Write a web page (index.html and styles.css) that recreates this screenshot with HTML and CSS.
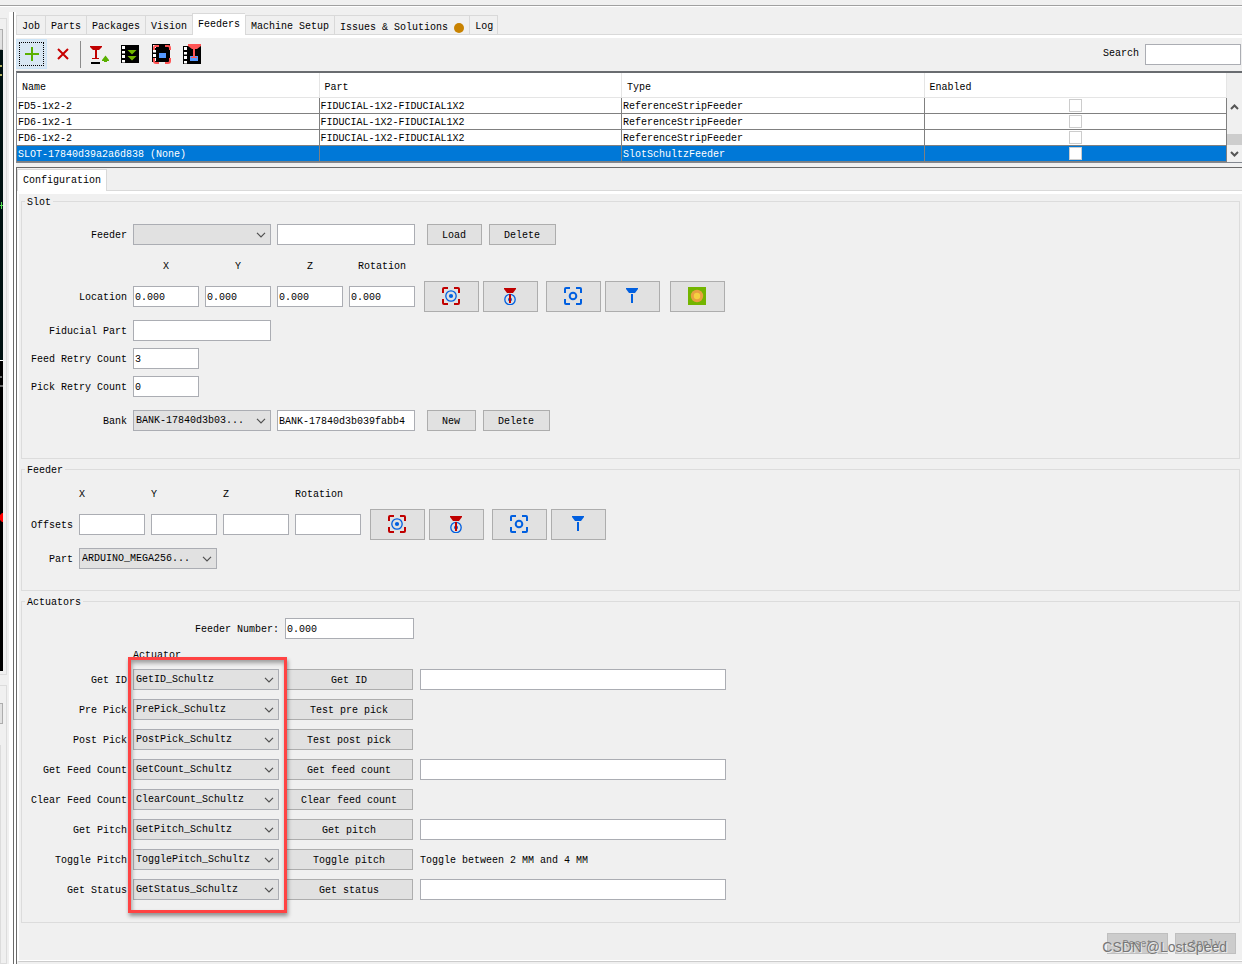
FILE: index.html
```html
<!DOCTYPE html>
<html lang="en">
<head>
<meta charset="utf-8">
<title>Feeders</title>
<link rel="stylesheet" href="styles.css">
</head>
<body>
<svg class="defs" aria-hidden="true">
  <symbol id="chevron" viewBox="0 0 10 6"><path d="M1 .8 5 4.8 9 .8" fill="none" stroke="#505050" stroke-width="1.2"/></symbol>
  <symbol id="cam-capture" viewBox="0 0 18 18">
    <path d="M1 6V2Q1 1 2 1H6M12 1h4q1 0 1 1v4M17 12v4q0 1-1 1h-4M6 17H2q-1 0-1-1v-4" fill="none" stroke="#c00000" stroke-width="2"/>
    <circle cx="9" cy="9" r="5.2" fill="none" stroke="#005fe0" stroke-width="1.3"/><circle cx="9" cy="9" r="2.1" fill="#005fe0"/>
  </symbol>
  <symbol id="tool-capture" viewBox="0 0 18 18">
    <circle cx="9" cy="12.500" r="5.200" fill="none" stroke="#005fe0" stroke-width="1.3"/><circle cx="9" cy="12.500" r="2" fill="#005fe0"/>
    <path d="M3 1h12v1l-3 4H6L3 2zM8 7h2v9H8z" fill="#c00000"/>
  </symbol>
  <symbol id="cam-move" viewBox="0 0 18 18">
    <path d="M1 6V2Q1 1 2 1H6M12 1h4q1 0 1 1v4M17 12v4q0 1-1 1h-4M6 17H2q-1 0-1-1v-4" fill="none" stroke="#005fe0" stroke-width="2"/>
    <circle cx="9" cy="9" r="3.3" fill="none" stroke="#005fe0" stroke-width="2"/>
  </symbol>
  <symbol id="tool-move" viewBox="0 0 18 18"><path d="M3 1h12v1l-3 4H6L3 2zM8 7h2v9H8z" fill="#005fe0"/></symbol>
  <symbol id="fiducial" viewBox="0 0 18 18"><path d="M0 0h18v18H0z" fill="#73b500"/><circle cx="9" cy="9" r="6.2" fill="#e8a040"/><circle cx="9" cy="9" r="3.2" fill="#f5d040"/></symbol>
</svg>

<div class="top-edge"></div>
<div class="workspace">
  <aside class="rail">
    <div class="rail-box rail-camera">
      <div class="rail-stub"></div>
      <div class="camera-view">
        <svg width="3" height="621" viewBox="0 0 3 621" aria-hidden="true">
          <path d="M0 0h3v310H0z" fill="#001212"/><path d="M0 310h3v311H0z" fill="#000"/>
          <path d="M0 16h2M0 25h2" stroke="#b0b060" stroke-width="2"/><path d="M0 155.500h3M1.500 152v7" stroke="#50e050"/>
          <path d="M0 310.500h3" stroke="#fff"/><path d="M0 327h2M0 336h3" stroke="#666" stroke-width="2"/>
          <path d="M0 465l2-2h1v9H2l-2-2z" fill="#f00"/>
        </svg>
      </div>
    </div>
    <div class="rail-box rail-controls"><div class="rail-stub"></div><div class="rail-line"></div></div>
  </aside>

  <main class="main">
    <nav class="tabs" role="tablist">
      <button class="tab" role="tab">Job</button>
      <button class="tab" role="tab">Parts</button>
      <button class="tab" role="tab">Packages</button>
      <button class="tab" role="tab">Vision</button>
      <button class="tab tab-active" role="tab" aria-selected="true">Feeders</button>
      <button class="tab" role="tab">Machine Setup</button>
      <button class="tab tab-issues" role="tab">Issues &amp; Solutions<span class="dot"></span></button>
      <button class="tab tab-last" role="tab">Log</button>
    </nav>

    <div class="toolbar">
      <button class="tool tool-focus" aria-label="New feeder"><svg width="24" height="24" viewBox="0 0 24 24"><path d="M12 5v14M5 12h14" stroke="#5ab000" stroke-width="2"/></svg></button>
      <button class="tool" aria-label="Delete feeder"><svg width="24" height="24" viewBox="0 0 24 24"><path d="M7 7l10 10M17 7 7 17" stroke="#c80000" stroke-width="2"/></svg></button>
      <span class="separator"></span>
      <button class="tool" aria-label="Pick"><svg width="24" height="24" viewBox="0 0 24 24"><path d="M3 4h12v1l-3 3H6L3 5zM8 8h2v9H8zM5 16h7v1H5z" fill="#c00000"/><path d="M4 20h9v2H4z" fill="#000"/><path d="M18.500 13.500 22 18v1h-2v1h-3v-1h-2v-1z" fill="#5ab000"/></svg></button>
      <button class="tool" aria-label="Feed"><svg width="24" height="24" viewBox="0 0 24 24"><path d="M3 3h18v18H3z"/><path d="M4 4h3v3H4zM4 9h3v2.500H4zM4 13h3v3H4zM4 18h3v2.500H4z" fill="#fff"/><path d="M9.500 8h9L14 12.500zM9.500 14h9L14 18.500z" fill="#73b500"/></svg></button>
      <button class="tool" aria-label="Move camera to pick location"><svg width="24" height="24" viewBox="0 0 24 24"><path d="M3 2h18v18H3z"/><path d="M4 3h3v3H4zM4 8h3v2.500H4zM4 12h3v3H4zM4 16h3v3H4z" fill="#fff"/><path d="M10 11h7v5h-7z" fill="#5599ff"/><path d="M5 8V6q0-2 2-2h3M16 4h3q2 0 2 2v2M21 16v3q0 2-2 2h-3M10 21H7q-2 0-2-2v-3" fill="none" stroke="#ff5555" stroke-width="2"/></svg></button>
      <button class="tool" aria-label="Move tool to pick location"><svg width="24" height="24" viewBox="0 0 24 24"><path d="M3 4h18v18H3z"/><path d="M4 5h3v3H4zM4 10h3v2.500H4zM4 14h3v3H4zM4 19h3v2.500H4z" fill="#fff"/><path d="M10 14h8v5h-8z" fill="#5599ff"/><path d="M8 2h13v2l-4 3h-5L8 4zM13 7h2v9h-2zM11 15h6v1h-6z" fill="#ff5555"/></svg></button>
      <label class="search-label" for="search">Search</label>
      <input class="field search" id="search" type="text">
    </div>

    <section class="table-pane">
      <div class="table-scroll">
        <table class="feeders">
          <thead><tr><th>Name</th><th>Part</th><th>Type</th><th>Enabled</th></tr></thead>
          <tbody>
            <tr><td>FD5-1x2-2</td><td>FIDUCIAL-1X2-FIDUCIAL1X2</td><td>ReferenceStripFeeder</td><td class="check-cell"><input class="check" type="checkbox" aria-label="Enable FD5-1x2-2"></td></tr>
            <tr><td>FD6-1x2-1</td><td>FIDUCIAL-1X2-FIDUCIAL1X2</td><td>ReferenceStripFeeder</td><td class="check-cell"><input class="check" type="checkbox" aria-label="Enable FD6-1x2-1"></td></tr>
            <tr><td>FD6-1x2-2</td><td>FIDUCIAL-1X2-FIDUCIAL1X2</td><td>ReferenceStripFeeder</td><td class="check-cell"><input class="check" type="checkbox" aria-label="Enable FD6-1x2-2"></td></tr>
            <tr class="selected"><td>SLOT-17840d39a2a6d838 (None)</td><td></td><td>SlotSchultzFeeder</td><td class="check-cell"><input class="check" type="checkbox" aria-label="Enable slot"></td></tr>
          </tbody>
        </table>
      </div>
      <div class="scrollbar">
        <svg width="9" height="6" viewBox="0 0 9 6" aria-hidden="true"><path d="M1 5l3.500-3.500L8 5" fill="none" stroke="#555" stroke-width="2"/></svg>
        <span class="thumb"></span>
        <svg width="9" height="6" viewBox="0 0 9 6" aria-hidden="true"><path d="M1 1l3.500 3.500L8 1" fill="none" stroke="#555" stroke-width="2"/></svg>
      </div>
    </section>

    <section class="config">
      <nav class="tabs config-tabs" role="tablist"><button class="tab tab-active" role="tab" aria-selected="true">Configuration</button></nav>
      <div class="config-body">
        <fieldset class="group group-slot">
          <legend>Slot</legend>
          <div class="row">
            <label class="label" for="slot-feeder">Feeder</label>
            <span class="combo w-wide"><select id="slot-feeder"><option></option></select><svg><use href="#chevron"/></svg></span>
            <input class="field w-wide" type="text" aria-label="Feeder name">
            <div class="actions"><button class="btn">Load</button><button class="btn">Delete</button></div>
          </div>
          <div class="row axes">
            <span class="label"></span><span class="w-axis">X</span><span class="w-axis">Y</span><span class="w-axis">Z</span><span class="w-axis">Rotation</span>
          </div>
          <div class="row row-location">
            <label class="label" for="loc-x">Location</label>
            <input class="field w-axis" id="loc-x" type="text" value="0.000">
            <input class="field w-axis" type="text" value="0.000" aria-label="Y">
            <input class="field w-axis" type="text" value="0.000" aria-label="Z">
            <input class="field w-axis" type="text" value="0.000" aria-label="Rotation">
            <div class="icon-set">
              <div class="pair"><button class="icon-btn" aria-label="Capture camera"><svg><use href="#cam-capture"/></svg></button><button class="icon-btn" aria-label="Capture tool"><svg><use href="#tool-capture"/></svg></button></div>
              <div class="pair"><button class="icon-btn" aria-label="Move camera"><svg><use href="#cam-move"/></svg></button><button class="icon-btn" aria-label="Move tool"><svg><use href="#tool-move"/></svg></button></div>
              <button class="icon-btn icon-btn-apart" aria-label="Fiducial align"><svg><use href="#fiducial"/></svg></button>
            </div>
          </div>
          <div class="row row-fiducial"><label class="label" for="fid-part">Fiducial Part</label><input class="field w-wide" id="fid-part" type="text"></div>
          <div class="row row-retry"><label class="label" for="feed-retry">Feed Retry Count</label><input class="field w-axis" id="feed-retry" type="text" value="3"></div>
          <div class="row row-retry"><label class="label" for="pick-retry">Pick Retry Count</label><input class="field w-axis" id="pick-retry" type="text" value="0"></div>
          <div class="row row-bank">
            <label class="label" for="bank">Bank</label>
            <span class="combo w-wide"><select id="bank"><option>BANK-17840d3b03...</option></select><svg><use href="#chevron"/></svg></span>
            <input class="field w-wide" type="text" value="BANK-17840d3b039fabb4" aria-label="Bank name">
            <div class="actions"><button class="btn">New</button><button class="btn">Delete</button></div>
          </div>
        </fieldset>

        <fieldset class="group group-feeder">
          <legend>Feeder</legend>
          <div class="row axes">
            <span class="label"></span><span class="w-axis">X</span><span class="w-axis">Y</span><span class="w-axis">Z</span><span class="w-axis">Rotation</span>
          </div>
          <div class="row row-location">
            <label class="label" for="off-x">Offsets</label>
            <input class="field w-axis" id="off-x" type="text">
            <input class="field w-axis" type="text" aria-label="Y offset">
            <input class="field w-axis" type="text" aria-label="Z offset">
            <input class="field w-axis" type="text" aria-label="Rotation offset">
            <div class="icon-set">
              <div class="pair"><button class="icon-btn" aria-label="Capture camera"><svg><use href="#cam-capture"/></svg></button><button class="icon-btn" aria-label="Capture tool"><svg><use href="#tool-capture"/></svg></button></div>
              <div class="pair"><button class="icon-btn" aria-label="Move camera"><svg><use href="#cam-move"/></svg></button><button class="icon-btn" aria-label="Move tool"><svg><use href="#tool-move"/></svg></button></div>
            </div>
          </div>
          <div class="row row-fiducial">
            <label class="label" for="part">Part</label>
            <span class="combo w-wide"><select id="part"><option>ARDUINO_MEGA256...</option></select><svg><use href="#chevron"/></svg></span>
          </div>
        </fieldset>

        <fieldset class="group group-actuators">
          <legend>Actuators</legend>
          <div class="row"><label class="label label-number" for="feeder-number">Feeder Number:</label><input class="field w-number" id="feeder-number" type="text" value="0.000"></div>
          <div class="row axes"><span class="label"></span><span>Actuator</span></div>
          <div class="actuators">
            <div class="row"><label class="label" for="a1">Get ID</label><span class="combo w-actuator"><select id="a1"><option>GetID_Schultz</option></select><svg><use href="#chevron"/></svg></span><button class="btn w-action">Get ID</button><input class="field w-result" type="text" aria-label="ID"></div>
            <div class="row"><label class="label" for="a2">Pre Pick</label><span class="combo w-actuator"><select id="a2"><option>PrePick_Schultz</option></select><svg><use href="#chevron"/></svg></span><button class="btn w-action">Test pre pick</button></div>
            <div class="row"><label class="label" for="a3">Post Pick</label><span class="combo w-actuator"><select id="a3"><option>PostPick_Schultz</option></select><svg><use href="#chevron"/></svg></span><button class="btn w-action">Test post pick</button></div>
            <div class="row"><label class="label" for="a4">Get Feed Count</label><span class="combo w-actuator"><select id="a4"><option>GetCount_Schultz</option></select><svg><use href="#chevron"/></svg></span><button class="btn w-action">Get feed count</button><input class="field w-result" type="text" aria-label="Feed count"></div>
            <div class="row"><label class="label" for="a5">Clear Feed Count</label><span class="combo w-actuator"><select id="a5"><option>ClearCount_Schultz</option></select><svg><use href="#chevron"/></svg></span><button class="btn w-action">Clear feed count</button></div>
            <div class="row"><label class="label" for="a6">Get Pitch</label><span class="combo w-actuator"><select id="a6"><option>GetPitch_Schultz</option></select><svg><use href="#chevron"/></svg></span><button class="btn w-action">Get pitch</button><input class="field w-result" type="text" aria-label="Pitch"></div>
            <div class="row"><label class="label" for="a7">Toggle Pitch</label><span class="combo w-actuator"><select id="a7"><option>TogglePitch_Schultz</option></select><svg><use href="#chevron"/></svg></span><button class="btn w-action">Toggle pitch</button><span class="note">Toggle between 2 MM and 4 MM</span></div>
            <div class="row"><label class="label" for="a8">Get Status</label><span class="combo w-actuator"><select id="a8"><option>GetStatus_Schultz</option></select><svg><use href="#chevron"/></svg></span><button class="btn w-action">Get status</button><input class="field w-result" type="text" aria-label="Status"></div>
            <div class="highlight"></div>
          </div>
        </fieldset>

        <footer class="footer">
          <button class="btn btn-off" disabled>Reset</button><button class="btn btn-off" disabled>Apply</button>
          <span class="watermark">CSDN @LostSpeed</span>
        </footer>
      </div>
    </section>
  </main>
</div>
</body>
</html>
```
FILE: styles.css
```css
* { box-sizing: border-box; }

body {
  margin: 0;
  min-height: 100vh;
  display: flex;
  flex-direction: column;
  background: #f0f0f0;
  color: #000;
  font: 10px/12px "Liberation Mono", monospace;
}

button, input, select { font: inherit; color: inherit; margin: 0; border-radius: 0; }
button { padding: 0; }
.defs { position: absolute; width: 0; height: 0; }

.top-edge { height: 7px; border-bottom: 1px solid #fff; box-shadow: inset 0 -1px #a0a0a0; }
.workspace { flex: 1; display: flex; padding-top: 5px; }

/* Edge of the neighbouring pane */
.rail {
  width: 13px;
  flex: none;
  display: flex;
  flex-direction: column;
  gap: 10px;
  padding: 6px 6px 0 0;
  box-shadow: inset -4px 0 #fff;
}
.rail-box { border: 1px solid #dcdcdc; border-left: 0; }
.rail-camera { flex: 1; padding-top: 10px; }
.rail-controls { height: 279px; padding-top: 17px; }
.rail-stub { width: 3px; height: 21px; background: #e1e1e1; border: 1px solid #adadad; border-left: 0; }
.rail-line { width: 1px; height: 220px; margin-top: 21px; background: #dcdcdc; }
.camera-view { width: 3px; height: 621px; background: #000; }
.camera-view svg { display: block; }

.main {
  flex: 1;
  min-width: 0;
  display: flex;
  flex-direction: column;
  padding-left: 2px;
  border-left: 1px solid #696969;
  box-shadow: inset 2px 0 #fff;
}

.tabs {
  display: flex;
  align-items: flex-end;
  height: 26px;
  border-bottom: 3px solid #fff;
  box-shadow: inset 0 -1px #d9d9d9;
}
.tab {
  height: 20px;
  padding: 3px 5px 0;
  border: 1px solid #d9d9d9;
  border-right: 0;
  background: #f0f0f0;
}
.tab-active { height: 22px; padding: 0 5px; border-bottom: 0; background: #fff; }
.tab-last { border-right: 1px solid #d9d9d9; padding-right: 4px; }
.tab-issues { display: flex; align-items: center; gap: 6px; padding-top: 6px; }
.dot { width: 10px; height: 10px; border-radius: 50%; background: #c88200; }

.toolbar { display: flex; align-items: center; height: 33px; padding: 0 1px 1px 0; }
.tool { display: grid; place-items: center; width: 31px; height: 30px; border: 0; background: none; }
.tool-focus { background: #d8e6f2; border: 1px solid #cce4f7; outline: 1px dotted #000; outline-offset: -4px; }
.separator { width: 1px; height: 27px; margin: 0 2px; background: #8c8c8c; }
.search-label { margin-left: auto; }
.search { width: 96px; margin-left: 6px; }

.field { height: 21px; padding: 1px 1px 0; border: 1px solid #abadb3; background: #fff; outline: 0; }

.table-pane {
  display: flex;
  border: 1px solid #82878f;
  border-top: 2px solid #696c70;
  border-right: 0;
}
.table-scroll { flex: 1; min-width: 0; }
.feeders { width: 100%; table-layout: fixed; border-collapse: separate; border-spacing: 0; background: #fff; }
.feeders th {
  height: 25px;
  padding: 5px 5px 0;
  text-align: left;
  font-weight: normal;
  border-right: 1px solid #e5e5e5;
  border-bottom: 1px solid #e5e5e5;
}
.feeders td { height: 16px; padding: 2px 1px 0; line-height: 13px; border-right: 1px solid #808080; border-bottom: 1px solid #808080; }
.feeders .check-cell { padding-top: 0; }
.check { appearance: none; display: block; width: 13px; height: 13px; margin: 0 auto; border: 1px solid #ccc; background: #fff; }
.selected td { background: #0078d7; color: #fff; }
.scrollbar { width: 15px; padding: 31px 0 5px; display: flex; flex-direction: column; align-items: center; }
.thumb { width: 15px; height: 11px; margin-top: auto; margin-bottom: 6px; background: #cdcdcd; }

.config { flex: 1; display: flex; flex-direction: column; margin-top: 4px; border-top: 1px solid #696969; border-left: 1px solid #696969; }
.config-tabs .tab { border-right: 1px solid #d9d9d9; }
.config-body { flex: 1; margin-bottom: 2px; padding: 0 2px 6px; border-left: 2px solid #fff; border-bottom: 1px solid #ccc; box-shadow: inset 0 -1px #fff; }

.group { margin: 0 0 3px; min-width: 0; border: 1px solid #dcdcdc; padding: 15px 3px 27px; }
.group-feeder { padding-top: 11px; padding-bottom: 21px; }
.group-actuators { padding-top: 9px; padding-bottom: 22px; margin-bottom: 0; }
legend { padding: 3px 2px 0; }

.row { display: flex; align-items: center; gap: 6px; min-height: 21px; }
.label { width: 102px; padding-top: 2px; text-align: right; white-space: nowrap; }
.note { padding-top: 2px; }
.group-feeder .label { width: 48px; }
.group-actuators .label-number { width: 254px; }
.axes { min-height: 12px; height: 12px; margin: 16px 0 8px; }
.group-slot .axes { text-align: center; }
.group-feeder .axes { margin-top: 1px; }
.group-actuators .axes { margin: 11px 0 7px; }
.row-fiducial { margin-top: 8px; }
.row-retry { margin-top: 7px; }
.row-bank { margin-top: 13px; }
.w-axis { width: 66px; }
.w-wide { width: 138px; }
.w-number { width: 129px; }
.w-actuator { width: 146px; }
.w-action { width: 128px; margin-right: 1px; }
.w-result { width: 306px; }

.combo { display: grid; align-items: center; }
.combo select {
  grid-area: 1 / 1;
  width: 100%;
  height: 21px;
  padding: 1px 20px 0 2px;
  appearance: none;
  border: 1px solid #abadb3;
  background: #e1e1e1;
}
.combo svg { grid-area: 1 / 1; justify-self: end; width: 10px; height: 6px; margin: 1px 5px 0 0; pointer-events: none; }

.btn { height: 21px; padding: 2px 14px 0; border: 1px solid #adadad; background: #e1e1e1; }
.actions { display: flex; gap: 7px; margin-left: 6px; }
.actions .btn { padding-right: 15px; }
.icon-set { display: flex; gap: 8px; margin-left: 3px; }
.pair { display: flex; gap: 4px; }
.icon-btn { display: grid; place-items: center; width: 55px; height: 31px; padding: 0 1px 1px 0; border: 1px solid #adadad; background: #e1e1e1; }
.icon-btn svg { width: 18px; height: 18px; }
.icon-btn-apart { margin-left: 2px; }

.actuators { position: relative; display: flex; flex-direction: column; gap: 9px; }
.highlight {
  position: absolute;
  top: -12px;
  bottom: -13px;
  left: 103px;
  width: 159px;
  border: 3px solid #ff4343;
  box-shadow: 1px 3px 4px rgba(0, 0, 0, .4), inset 1px 3px 4px rgba(0, 0, 0, .35);
  pointer-events: none;
}

.footer { position: relative; display: flex; justify-content: flex-end; gap: 7px; padding: 10px 4px 0 0; }
.btn-off { width: 61px; background: #ccc; border-color: #bfbfbf; color: #838383; }
.watermark {
  position: absolute;
  right: 13px;
  bottom: -1px;
  font: 14px/16px "Liberation Sans", Arial, sans-serif;
  color: #777;
  text-shadow: 1px 1px #eee;
}
```
